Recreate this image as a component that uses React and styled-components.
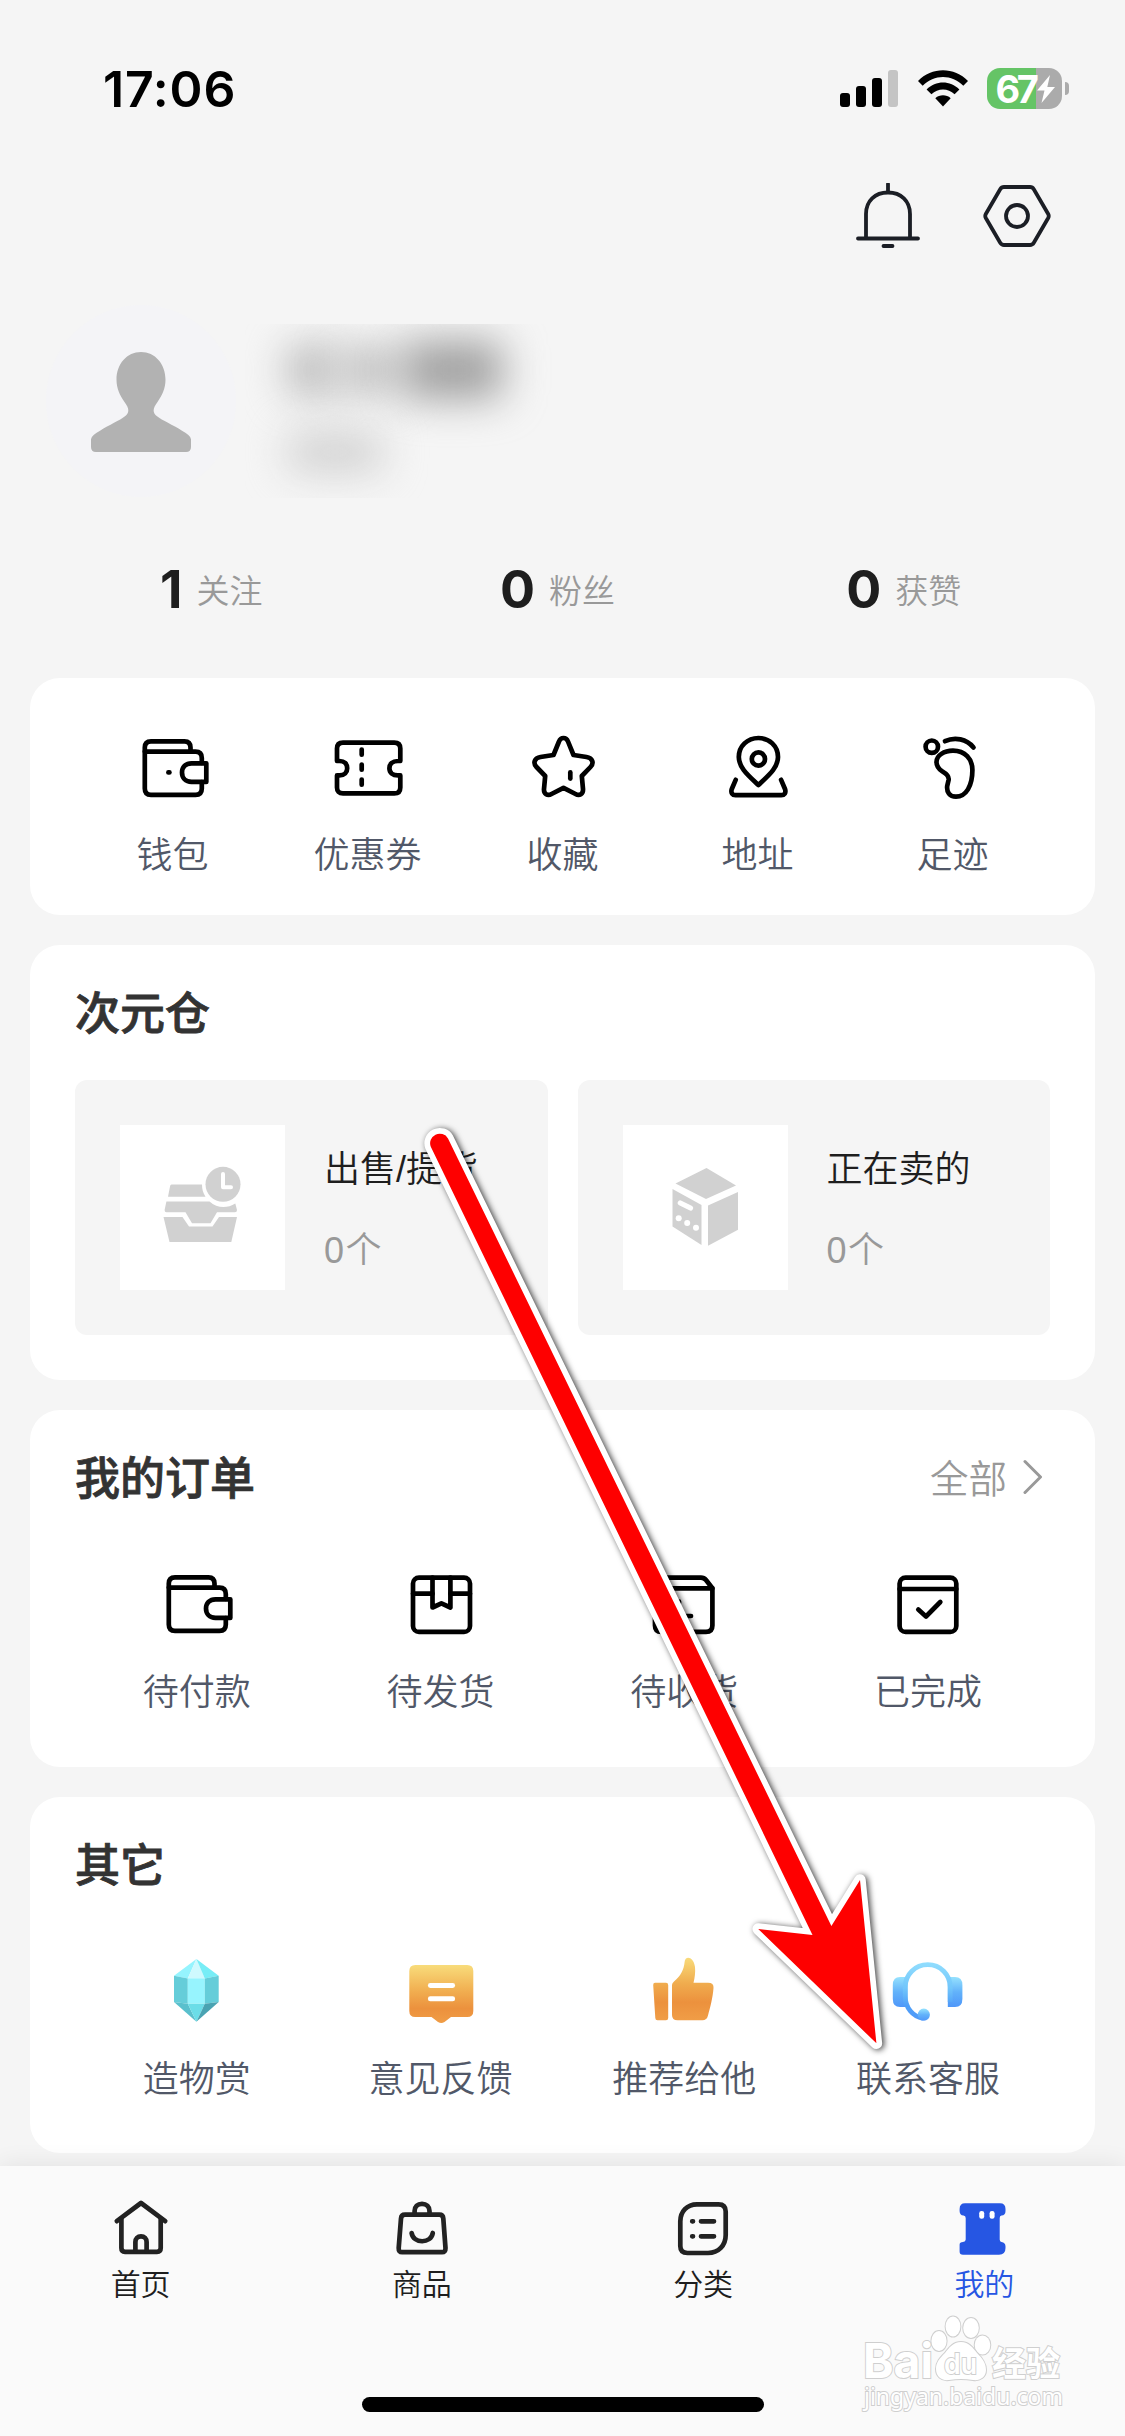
import { styled, createGlobalStyle } from "styled-components";

const GlobalStyle = createGlobalStyle`
  * {
    box-sizing: border-box;
  }
  body {
    margin: 0;
    background-color: #f5f5f5;
    font-family: "Noto Sans CJK SC", sans-serif;
    font-weight: 350;
  }
`;

const stats = [
  { value: 1, label: "关注" },
  { value: 0, label: "粉丝" },
  { value: 0, label: "获赞" },
];

const shortcuts = [
  { label: "钱包", icon: <WalletIcon dot /> },
  { label: "优惠券", icon: <CouponIcon /> },
  { label: "收藏", icon: <StarIcon /> },
  { label: "地址", icon: <AddressIcon /> },
  { label: "足迹", icon: <FootIcon /> },
];

const boxes = [
  { label: "出售/提货", icon: <StorageIcon /> },
  { label: "正在卖的", icon: <CubeIcon /> },
];

const orders = [
  { label: "待付款", icon: <WalletIcon /> },
  { label: "待发货", icon: <PackageIcon /> },
  { label: "待收货", icon: <ReceiveIcon /> },
  { label: "已完成", icon: <DoneIcon /> },
];

const others = [
  { label: "造物赏", icon: <GemIcon /> },
  { label: "意见反馈", icon: <FeedbackIcon /> },
  { label: "推荐给他", icon: <ThumbIcon /> },
  { label: "联系客服", icon: <HeadsetIcon /> },
];

const tabs = [
  { label: "首页", icon: <HomeIcon /> },
  { label: "商品", icon: <BagIcon /> },
  { label: "分类", icon: <CategoryIcon /> },
  { label: "我的", icon: <MineIcon />, active: true },
];

export default function App() {
  return (
    <Phone>
      <GlobalStyle />
      <StatusBar>
        <Time>17:06</Time>
        <StatusIcons>
          <SignalIcon />
          <WifiIcon />
          <Battery>
            <BatteryBody>
              67
              <BoltIcon />
            </BatteryBody>
            <BatteryNub />
          </Battery>
        </StatusIcons>
      </StatusBar>

      <Actions>
        <BellIcon />
        <SettingsIcon />
      </Actions>

      <Profile>
        <Avatar>
          <PersonIcon />
        </Avatar>
        <HiddenInfo>
          <HiddenName>
            <Smudge $width={50} $height={50} $color="#bababa" />
            <Smudge $width={66} $height={44} $color="#c0c0c0" />
            <Smudge $width={100} $height={58} $color="#a0a0a0" />
          </HiddenName>
          <Smudge $width={96} $height={38} $color="#cfcfcf" />
        </HiddenInfo>
      </Profile>

      <Stats>
        {stats.map((stat) => (
          <Stat key={stat.label}>
            <StatValue>{stat.value}</StatValue>
            <StatLabel>{stat.label}</StatLabel>
          </Stat>
        ))}
      </Stats>

      <Cards>
        <Card $height={237}>
          <IconRow $top={53}>
            {shortcuts.map((item) => (
              <IconItem key={item.label} $gap={23}>
                {item.icon}
                <ItemLabel>{item.label}</ItemLabel>
              </IconItem>
            ))}
          </IconRow>
        </Card>

        <Card $height={435}>
          <CardHeader>
            <Title>次元仓</Title>
          </CardHeader>
          <BoxRow>
            {boxes.map((box) => (
              <Box key={box.label}>
                <BoxImage>{box.icon}</BoxImage>
                <BoxInfo>
                  <BoxName>{box.label}</BoxName>
                  <BoxCount>0个</BoxCount>
                </BoxInfo>
              </Box>
            ))}
          </BoxRow>
        </Card>

        <Card $height={357}>
          <CardHeader>
            <Title>我的订单</Title>
            <More>
              全部
              <ChevronIcon />
            </More>
          </CardHeader>
          <IconRow $top={22}>
            {orders.map((item) => (
              <IconItem key={item.label}>
                {item.icon}
                <ItemLabel>{item.label}</ItemLabel>
              </IconItem>
            ))}
          </IconRow>
        </Card>

        <Card $height={356}>
          <CardHeader>
            <Title>其它</Title>
          </CardHeader>
          <IconRow $top={22}>
            {others.map((item) => (
              <IconItem key={item.label}>
                {item.icon}
                <ItemLabel>{item.label}</ItemLabel>
              </IconItem>
            ))}
          </IconRow>
        </Card>
      </Cards>

      <TabBar>
        <Tabs>
          {tabs.map((tab) => (
            <Tab key={tab.label} $active={tab.active}>
              {tab.icon}
              <TabLabel>{tab.label}</TabLabel>
            </Tab>
          ))}
        </Tabs>
        <HomeIndicator />
      </TabBar>

      <Watermark />
      <Arrow />
    </Phone>
  );
}

/* status bar icons */

function SignalIcon() {
  return (
    <svg width="58" height="37" viewBox="0 0 58 37">
      <rect x="0" y="23" width="10" height="14" rx="3" fill="#000" />
      <rect x="16" y="16" width="10" height="21" rx="3" fill="#000" />
      <rect x="32" y="8" width="10" height="29" rx="3" fill="#000" />
      <rect x="48" y="0" width="10" height="37" rx="3" fill="#c4c4c4" />
    </svg>
  );
}

function WifiIcon() {
  return (
    <svg width="50" height="37" viewBox="0 0 50 37">
      <path d="M0 11 C13.5 -3.4 36.5 -3.4 50 11 L45.3 15.8 C34 4.2 16 4.2 4.7 15.8 Z" />
      <path d="M8.6 19.4 C17.8 10.2 32.2 10.2 41.4 19.4 L36.6 24.3 C30 17.8 20 17.8 13.4 24.3 Z" />
      <path d="M17.3 28.2 C21.7 24.4 28.3 24.4 32.7 28.2 L25 36.5 Z" />
    </svg>
  );
}

function BoltIcon() {
  return (
    <svg width="18" height="28" viewBox="0 0 18 28">
      <path d="M13 0 L0 15.5 H7.5 L4.5 28 L18 12 H10.3 Z" fill="#fff" />
    </svg>
  );
}

/* header icons */

function BellIcon() {
  return (
    <LineIcon width="66" height="66" viewBox="0 0 66 66" $color="#1b1e25" $weight={3.8}>
      <path d="M33 1 V8" />
      <path d="M11 54 V31 C11 18 20 9.5 33 9.5 S55 18 55 31 V54" />
      <path d="M3 55.5 H63 M28.5 63 H37.5" />
    </LineIcon>
  );
}

function SettingsIcon() {
  return (
    <LineIcon width="70" height="66" viewBox="0 0 70 66" $color="#1b1e25" $weight={3.8}>
      <path d="M22 4 H48 Q50.5 4 51.8 6.2 L66.2 31 Q67.3 33 66.2 35 L51.8 59.8 Q50.5 62 48 62 H22 Q19.5 62 18.2 59.8 L3.8 35 Q2.7 33 3.8 31 L18.2 6.2 Q19.5 4 22 4 Z" />
      <circle cx="35" cy="33" r="11" />
    </LineIcon>
  );
}

function PersonIcon() {
  return (
    <svg width="100" height="100" viewBox="0 0 100 101" preserveAspectRatio="none">
      <path
        d="M50 0 C64 0 74.5 12 74.5 28 C74.5 37 71 44 66.5 50.5 C61.5 57.5 61.5 61 66 65 C71 69 82 74 91 79.5 Q100 84.5 100 88 V96 Q100 101 95 101 H5 Q0 101 0 96 V88 Q0 84.5 9 79.5 C18 74 29 69 34 65 C38.5 61 38.5 57.5 33.5 50.5 C29 44 25.5 37 25.5 28 C25.5 12 36 0 50 0 Z"
        fill="#b2b2b2"
      />
    </svg>
  );
}

/* line icons of the shortcut and order rows */

function WalletIcon({ dot }) {
  return (
    <LineIcon width="72" height="72" viewBox="0 0 72 72">
      <path d="M7.8 20.6 H58.5 Q64.8 20.6 64.8 27 V32" />
      <path d="M64.8 51 V57.5 Q64.8 63.9 58.5 63.9 H14 Q7.8 63.9 7.8 57.5 V16.6 Q7.8 10.3 14 10.3 H47.5 Q53.5 10.3 53.5 16.6 V20.6" />
      <path d="M69.3 32.3 V50.9 H54.5 C48.5 50.9 45 46.8 45 41.6 S48.5 32.3 54.5 32.3 Z" />
      {dot && <path d="M31.4 41.4 H32.4" />}
    </LineIcon>
  );
}

function CouponIcon() {
  return (
    <LineIcon width="72" height="72" viewBox="0 0 72 72">
      <path d="M5 30 V17.6 Q5 11.6 11 11.6 H62.3 Q68.3 11.6 68.3 17.6 V30 H66 C60.5 30 57.4 33 57.4 37.2 S60.5 44.4 66 44.4 H68.3 V56.4 Q68.3 62.4 62.3 62.4 H11 Q5 62.4 5 56.4 V44.4 H7.5 C12.5 44.4 15.2 41.4 15.2 37.2 S12.5 30 7.5 30 Z" />
      <path d="M29.7 18.5 V23.7 M29.7 33.5 V38.7 M29.7 48.5 V53.7" />
    </LineIcon>
  );
}

function StarIcon() {
  return (
    <LineIcon width="72" height="72" viewBox="0 0 72 72">
      <path d="M32 10.5 C33.8 5.8 39.2 5.8 41 10.5 L46.5 24 L59.5 26 C65.5 27 67.3 32 63.5 36 L54.8 45 L56 58 C56.4 63 52.4 65.3 48.5 63 L36.5 56.8 L24.5 63 C20.6 65.3 16.6 63 17 58 L18.2 45 L9.5 36 C5.7 32 7.5 27 13.5 26 L26.5 24 Z" />
      <path d="M43.3 41.4 V47.6" />
    </LineIcon>
  );
}

function AddressIcon() {
  return (
    <LineIcon width="72" height="72" viewBox="0 0 72 72">
      <path d="M36.4 54 C27 45 16.8 37 16.8 26 C16.8 15 25.5 7 36.4 7 S56 15 56 26 C56 37 45.8 45 36.4 54 Z" />
      <circle cx="36.4" cy="28" r="6.6" />
      <path d="M13.7 48.8 L9.8 58 C8.5 62 10.5 64.2 13.5 64.2 H59.3 C62.3 64.2 64.3 62 63 58 L59.1 48.8" />
    </LineIcon>
  );
}

function FootIcon() {
  return (
    <LineIcon width="72" height="72" viewBox="0 0 72 72">
      <circle cx="14.8" cy="15.7" r="6.2" />
      <path d="M28 10.2 C38 5.5 49.5 8 56.5 16.4" />
      <path d="M36 19.7 C48 19.7 55.4 28 55.4 39 C55.4 55 49 65.7 39 65.7 C32.5 65.7 29.5 61 30.2 55 L31.6 49 C32.3 45 29 42.5 25.5 40.5 C21.5 38 19.5 34.5 19.5 31 C19.5 24.5 27 19.7 36 19.7 Z" />
    </LineIcon>
  );
}

function PackageIcon() {
  return (
    <LineIcon width="72" height="72" viewBox="0 0 72 72">
      <rect x="8" y="10.6" width="57" height="54.3" rx="6" />
      <path d="M8 26.7 H27.5 M45.4 26.7 H65" />
      <path d="M27.5 10.6 V40.5 L36.4 36.4 L45.4 40.5 V10.6" />
    </LineIcon>
  );
}

function ReceiveIcon() {
  return (
    <LineIcon width="72" height="72" viewBox="0 0 72 72">
      <path d="M7 21.3 L14 12.6 Q15.6 10.6 18 10.6 H53 Q56 10.6 58 13 L64.4 21.3 V58.5 Q64.4 64.9 58 64.9 H13.3 Q7 64.9 7 58.5 Z" />
      <path d="M7 21.3 H64.4 M27 49 H43 M31 34.5 V36" />
    </LineIcon>
  );
}

function DoneIcon() {
  return (
    <LineIcon width="72" height="72" viewBox="0 0 72 72">
      <rect x="7.6" y="10.6" width="56.7" height="54.3" rx="6" />
      <path d="M7.6 22 H64.3" />
      <path d="M26.3 42.6 L34 49.5 L48.3 35" />
    </LineIcon>
  );
}

function ChevronIcon() {
  return (
    <LineIcon width="20" height="36" viewBox="0 0 20 36" $color="#999" $weight={3}>
      <path d="M2 2.5 L17.5 18 L2 33.5" />
    </LineIcon>
  );
}

/* grey placeholders in the storage boxes */

function StorageIcon() {
  return (
    <svg width="80" height="84" viewBox="0 0 80 84" fill="#d1d1d1">
      <path d="M8.5 18.5 H39 C39 23 40 27 42.5 30.7 H5 L7 20.5 Q7.3 18.5 8.5 18.5 Z" />
      <path d="M3.4 35.5 H46.5 C54 42.3 64 42.8 72.3 37.5 L74 44 Q74 46.2 72 46.2 H54 L47.5 57.3 H29 L22.5 46.2 H3.5 Q1.5 46.2 1.6 44 Z" />
      <path d="M0.5 51 H19.5 L26 60.6 H49.5 L56 51 H74 L68.3 76 H6.5 Z" />
      <circle cx="60" cy="18.3" r="17.5" />
      <path
        d="M60 8 V21.3 H68"
        fill="none"
        stroke="#fff"
        strokeWidth="4"
        strokeLinecap="round"
        strokeLinejoin="round"
      />
    </svg>
  );
}

function CubeIcon() {
  return (
    <svg width="66" height="80" viewBox="0 0 66 80" fill="#d1d1d1">
      <path d="M34.5 0 L64 17.5 L34 31 L3.5 15.5 Z" />
      <path d="M0.5 21 L29.5 37 V77 L0.5 58.5 Z" />
      <path d="M36 37.5 L66 24 V61.7 L36 77.7 Z" />
      <path d="M8.3 35 L18.5 40" stroke="#fff" strokeWidth="5.2" strokeLinecap="round" />
      <circle cx="6.7" cy="50.3" r="3" fill="#fff" />
      <circle cx="15.2" cy="55" r="3" fill="#fff" />
      <circle cx="24" cy="59.7" r="3" fill="#fff" />
    </svg>
  );
}

/* coloured icons */

function GemIcon() {
  return (
    <svg width="72" height="72" viewBox="0 0 72 72">
      <path d="M35.4 5 L13 21.7 L26.8 24.4 Z" fill="#95f4fe" />
      <path d="M35.4 5 L26.8 24.4 H43.8 Z" fill="#cff9fe" />
      <path d="M35.4 5 L43.8 24.4 L57.7 21.7 Z" fill="#77edf6" />
      <path d="M13 21.7 L26.8 24.4 V49.7 L13 48 Z" fill="#65cdd9" />
      <path d="M26.8 24.4 H43.8 V49.7 H26.8 Z" fill="#97f4fe" />
      <path d="M43.8 24.4 L57.7 21.7 V48 L43.8 49.7 Z" fill="#65cdd9" />
      <path d="M13 48 L26.8 49.7 L35.4 67.7 Z" fill="#5ac0cd" />
      <path d="M26.8 49.7 H43.8 L35.4 67.7 Z" fill="#6bdde8" />
      <path d="M43.8 49.7 L57.7 48 L35.4 67.7 Z" fill="#4aa3b2" />
    </svg>
  );
}

function FeedbackIcon() {
  return (
    <svg width="72" height="72" viewBox="0 0 72 72">
      <defs>
        <linearGradient id="orange" x1="0" y1="0" x2="0" y2="1">
          <stop offset="0" stopColor="#f8dc7b" />
          <stop offset="0.45" stopColor="#f1ae50" />
          <stop offset="0.75" stopColor="#ec913d" />
          <stop offset="1" stopColor="#f09d46" />
        </linearGradient>
      </defs>
      <path
        d="M10.3 11 H62.3 Q68.3 11 68.3 17 V57 Q68.3 63 62.3 63 H46 L39.5 68 Q36.3 70.2 33 68 L26.5 63 H10.3 Q4.3 63 4.3 57 V17 Q4.3 11 10.3 11 Z"
        fill="url(#orange)"
      />
      <rect x="22.9" y="29" width="27.2" height="5" rx="2.4" fill="#fff" />
      <rect x="22.9" y="42.3" width="27.2" height="5" rx="2.4" fill="#fff" />
    </svg>
  );
}

function ThumbIcon() {
  return (
    <svg width="72" height="72" viewBox="0 0 72 72">
      <defs>
        <linearGradient id="thumb" gradientUnits="userSpaceOnUse" x1="0" y1="3" x2="0" y2="66">
          <stop offset="0" stopColor="#f9dc7b" />
          <stop offset="0.42" stopColor="#f0ac4e" />
          <stop offset="0.72" stopColor="#ec913d" />
          <stop offset="1" stopColor="#f09d46" />
        </linearGradient>
      </defs>
      <path
        d="M7 28.7 H18 Q20.2 28.7 20.2 31 V64 Q20.2 66.3 18 66.3 H9.5 Q7.4 66.3 7.3 64 L5.2 31 Q5.2 28.7 7 28.7 Z"
        fill="url(#thumb)"
      />
      <path
        d="M24 31 Q24 29 26 27.5 C33 22 36 15 36.6 8 C37 1.5 45.5 2 47 13 C47.5 18 46.8 24 45.5 28.7 H60 Q66 28.7 65.5 34 C64.8 44 62 54 60 61.5 Q58.8 66.3 54.5 66.3 H29.5 Q24 66.3 24 61 Z"
        fill="url(#thumb)"
      />
    </svg>
  );
}

function HeadsetIcon() {
  return (
    <svg width="72" height="72" viewBox="0 0 72 72">
      <defs>
        <linearGradient id="ear" x1="0" y1="0" x2="0" y2="1">
          <stop offset="0" stopColor="#96e2fe" />
          <stop offset="0.5" stopColor="#62b2fa" />
          <stop offset="1" stopColor="#4f97f9" />
        </linearGradient>
        <linearGradient id="band" gradientUnits="userSpaceOnUse" x1="0" y1="8" x2="0" y2="66">
          <stop offset="0" stopColor="#92defe" />
          <stop offset="0.45" stopColor="#72c6fb" />
          <stop offset="0.75" stopColor="#4f9ff8" />
          <stop offset="1" stopColor="#4f9af9" />
        </linearGradient>
      </defs>
      <path d="M8 23 H15.5 V53 H8 Q0.8 53 0.8 45 V31 Q0.8 23 8 23 Z" fill="url(#ear)" />
      <path d="M55.8 23 H63 Q70.4 23 70.4 31 V45 Q70.4 53 63 53 H55.8 Z" fill="url(#ear)" />
      <path
        d="M58.2 48 V33.2 C58.2 20.5 48.5 10.7 35.8 10.7 S13.2 20.5 13.2 33.2 V42 C13.2 54 21 62.5 31 64.3"
        fill="none"
        stroke="url(#band)"
        strokeWidth="4.8"
      />
      <circle cx="31.8" cy="60.7" r="6.1" fill="url(#ear)" />
    </svg>
  );
}

/* tab bar icons */

function HomeIcon() {
  return (
    <LineIcon width="60" height="60" viewBox="0 0 60 60" $color="#222">
      <path d="M5.8 23.2 L30 5 L54.2 23.2" />
      <path d="M10.4 21 V50 Q10.4 53.8 14 53.8 H46 Q49.7 53.8 49.7 50 V21" />
      <path d="M24.4 53 V44 C24.4 40.4 26.6 38.4 30 38.4 S35.6 40.4 35.6 44 V53" />
    </LineIcon>
  );
}

function BagIcon() {
  return (
    <LineIcon width="60" height="60" viewBox="0 0 60 60" $color="#222">
      <path d="M13 16.7 H47.4 Q51 16.7 51.3 20.5 L53.5 50 Q53.6 54.2 50 54.2 H10.2 Q6.5 54.2 6.7 50 L9 20.5 Q9.3 16.7 13 16.7 Z" />
      <path d="M22.6 16 V13 C22.6 8.5 25.6 5.8 30 5.8 S37.5 8.5 37.5 13 V16" />
      <path d="M19.6 35 C21.5 46 38.8 46 40.8 35" />
    </LineIcon>
  );
}

function CategoryIcon() {
  return (
    <LineIcon width="60" height="60" viewBox="0 0 60 60" $color="#222">
      <path d="M24 6.3 H45.5 Q52.7 6.3 52.7 13.5 V37 C52.7 47.5 45.5 55 35 55 H14.5 Q7.3 55 7.3 48 V23.5 C7.3 13.5 14 6.3 24 6.3 Z" />
      <path d="M28 23.3 H41 M28 38.3 H41" />
      <path d="M19.2 23.3 H20 M19.2 38.3 H20" />
    </LineIcon>
  );
}

function MineIcon() {
  return (
    <svg width="60" height="60" viewBox="0 0 60 60">
      <path
        d="M11 5.3 H46 Q51.5 5.3 51.5 11 V13 Q51.5 17.3 47.5 17.6 Q45.7 17.8 45.7 20 V41.5 Q45.7 43.8 47.5 44 Q51.5 44.5 51.5 48.5 V50 Q51.5 56.7 45 56.7 H9 Q5.6 56.7 5.6 53.5 V46.5 Q5.6 44.2 9 44 Q11.7 43.8 11.7 41.5 V20 Q11.7 17.8 9.5 17.6 Q5.6 17.2 5.6 13 V11 Q5.6 5.3 11 5.3 Z"
        fill="#2656e3"
      />
      <rect x="25.2" y="13" width="5" height="7.7" rx="2.3" fill="#fff" />
      <rect x="35.6" y="13" width="5" height="7.7" rx="2.3" fill="#fff" />
    </svg>
  );
}

/* things that lie over the page */

function Watermark() {
  return (
    <WatermarkSvg width="230" height="116" viewBox="0 0 230 116">
      <text x="3" y="63" fontSize="48" fontWeight="700" textLength="70" lengthAdjust="spacingAndGlyphs">
        Bai
      </text>
      <ellipse cx="79" cy="26" rx="7.6" ry="10" />
      <ellipse cx="93" cy="11.5" rx="7.4" ry="10" />
      <ellipse cx="111" cy="13" rx="7.8" ry="10" />
      <ellipse cx="122.5" cy="30" rx="7.8" ry="9.6" />
      <path d="M101 27 C109 27 113 33 117 38 C122 43 126 48 126 55 C126 62 120 66 113 65 C105 63.5 97 63.5 89 65 C81 66 76 61 76 54 C76 47 80 43 85 38 C89 33 93 27 101 27 Z" />
      <text x="84" y="59" fontSize="29" fontWeight="600" textLength="33" lengthAdjust="spacingAndGlyphs">
        du
      </text>
      <text x="132" y="61" fontSize="34" fontWeight="700" textLength="68" lengthAdjust="spacingAndGlyphs">
        经验
      </text>
      <SiteText x="4" y="90" textLength="199" lengthAdjust="spacingAndGlyphs">
        jingyan.baidu.com
      </SiteText>
    </WatermarkSvg>
  );
}

function Arrow() {
  const shape =
    "M20.8 26.8 L402.5 815 L348.2 809 L466.4 923.3 L450 760 L421.4 806 L38 18.4 A9.6 9.6 0 0 0 20.8 26.8 Z";

  return (
    <ArrowSvg width="490" height="950" viewBox="0 0 490 950">
      <path d={shape} fill="#fff" stroke="#fff" strokeWidth="11.5" strokeLinejoin="round" />
      <path d={shape} fill="#fe0000" />
    </ArrowSvg>
  );
}

const Phone = styled.div`
  position: relative;
  display: flex;
  flex-direction: column;
  width: 1125px;
  height: 2436px;
  overflow: hidden;
  background-color: #f5f5f5;
`;

const StatusBar = styled.div`
  display: flex;
  align-items: center;
  justify-content: space-between;
  height: 136px;
  padding: 42px 56px 0 103px;
`;

const Time = styled.div`
  font-family: Inter, sans-serif;
  font-size: 50px;
  font-weight: 600;
  letter-spacing: 0.8px;
  color: #000;
`;

const StatusIcons = styled.div`
  display: flex;
  align-items: center;
  gap: 19.5px;
`;

const Battery = styled.div`
  display: flex;
  align-items: center;
  gap: 3px;
`;

const BatteryBody = styled.div`
  display: flex;
  align-items: center;
  justify-content: center;
  gap: 2px;
  width: 75px;
  height: 41px;
  padding-left: 2px;
  border-radius: 13px;
  background: linear-gradient(to right, #65c466 66%, #ababab 66%);
  color: #fff;
  font-family: Inter, sans-serif;
  font-size: 38px;
  font-weight: 700;
  letter-spacing: -3.4px;
  svg {
    flex-shrink: 0;
  }
`;

const BatteryNub = styled.div`
  width: 4px;
  height: 13px;
  border-radius: 0 4px 4px 0;
  background-color: #ababab;
`;

const Actions = styled.div`
  display: flex;
  align-items: center;
  justify-content: flex-end;
  gap: 61px;
  height: 160px;
  padding-right: 73px;
`;

const Profile = styled.div`
  display: flex;
  padding: 9px 0 0 46px;
`;

const Avatar = styled.div`
  display: flex;
  align-items: center;
  justify-content: center;
  width: 190px;
  height: 192px;
  padding-top: 2px;
  border-radius: 50%;
  background-color: #f4f4f7;
`;

const HiddenInfo = styled.div`
  display: flex;
  flex-direction: column;
  gap: 34px;
  width: 310px;
  height: 174px;
  margin: 19px 0 0 9px;
  padding: 17px 0 0 42px;
  overflow: hidden;
`;

const HiddenName = styled.div`
  display: flex;
  align-items: center;
`;

const Smudge = styled.div`
  width: ${(props) => props.$width}px;
  height: ${(props) => props.$height}px;
  border-radius: 12px;
  background-color: ${(props) => props.$color};
  filter: blur(20px);
`;

const Stats = styled.div`
  display: flex;
  height: 181px;
  padding: 4px 48px 0 38px;
`;

const Stat = styled.div`
  display: flex;
  flex: 1;
  align-items: center;
  justify-content: center;
  gap: 14px;
`;

const StatValue = styled.span`
  font-family: Inter, sans-serif;
  font-size: 52px;
  font-weight: 700;
  line-height: 60px;
  color: #1e1e1e;
`;

const StatLabel = styled.span`
  padding-bottom: 2px;
  font-size: 33px;
  line-height: 60px;
  color: #999;
`;

const Cards = styled.div`
  display: flex;
  flex-direction: column;
  gap: 30px;
  padding: 0 30px;
`;

const Card = styled.section`
  height: ${(props) => props.$height}px;
  padding: 0 45px;
  border-radius: 30px;
  background-color: #fff;
`;

const CardHeader = styled.div`
  display: flex;
  align-items: center;
  justify-content: space-between;
  height: 135px;
  padding-bottom: 3px;
`;

const Title = styled.h2`
  margin: 0;
  font-size: 45px;
  font-weight: 500;
  line-height: 60px;
  color: #333;
  -webkit-text-stroke: 0.8px #333;
`;

const More = styled.div`
  display: flex;
  align-items: center;
  gap: 16px;
  padding-right: 7px;
  font-size: 38.5px;
  line-height: 60px;
  color: #999;
  svg {
    margin-top: 2px;
  }
`;

const IconRow = styled.div`
  display: flex;
  padding-top: ${(props) => props.$top}px;
`;

const IconItem = styled.div`
  display: flex;
  flex: 1;
  flex-direction: column;
  align-items: center;
  gap: ${(props) => props.$gap || 24}px;
`;

const ItemLabel = styled.span`
  font-size: 36px;
  line-height: 52px;
  color: #515868;
`;

const BoxRow = styled.div`
  display: flex;
  gap: 30px;
`;

const Box = styled.div`
  display: flex;
  flex: 1;
  align-items: center;
  gap: 39px;
  height: 255px;
  padding: 0 45px;
  border-radius: 12px;
  background-color: #f5f5f5;
`;

const BoxImage = styled.div`
  display: flex;
  align-items: center;
  justify-content: center;
  width: 165px;
  height: 165px;
  background-color: #fff;
`;

const BoxInfo = styled.div`
  display: flex;
  flex-direction: column;
  gap: 29px;
  padding-top: 5px;
  font-family: "Liberation Sans", "Noto Sans CJK SC", sans-serif;
  font-size: 36px;
  line-height: 52px;
  white-space: nowrap;
`;

const BoxName = styled.div`
  color: #1e1e1e;
`;

const BoxCount = styled.div`
  letter-spacing: 1.5px;
  color: #999;
`;

const TabBar = styled.nav`
  display: flex;
  flex-direction: column;
  align-items: center;
  justify-content: space-between;
  height: 270px;
  margin-top: 13px;
  padding: 32px 0 24px;
  background-color: #fafafa;
  box-shadow: 0 0 24px rgba(0, 0, 0, 0.09);
`;

const Tabs = styled.div`
  display: flex;
  width: 100%;
`;

const Tab = styled.div`
  display: flex;
  flex: 1;
  flex-direction: column;
  align-items: center;
  color: ${(props) => (props.$active ? "#2656e3" : "#1e1e1e")};
`;

const TabLabel = styled.span`
  margin-top: 2px;
  font-size: 30px;
  line-height: 44px;
`;

const HomeIndicator = styled.div`
  width: 402px;
  height: 15px;
  border-radius: 8px;
  background-color: #000;
`;

const LineIcon = styled.svg`
  fill: none;
  stroke: ${(props) => props.$color || "#000"};
  stroke-width: ${(props) => props.$weight || 4.7};
  stroke-linecap: round;
  stroke-linejoin: round;
`;

const WatermarkSvg = styled.svg`
  position: absolute;
  left: 860px;
  top: 2315px;
  overflow: visible;
  fill: #fff;
  stroke: #cfcfcf;
  stroke-width: 2;
  paint-order: stroke;
  font-family: Inter, "Noto Sans CJK SC", sans-serif;
`;

const SiteText = styled.text`
  font-family: "Noto Sans", sans-serif;
  font-size: 24px;
  font-weight: 400;
`;

const ArrowSvg = styled.svg`
  position: absolute;
  left: 410px;
  top: 1120px;
  filter: drop-shadow(2px 1px 3px rgba(0, 0, 0, 0.75));
`;
